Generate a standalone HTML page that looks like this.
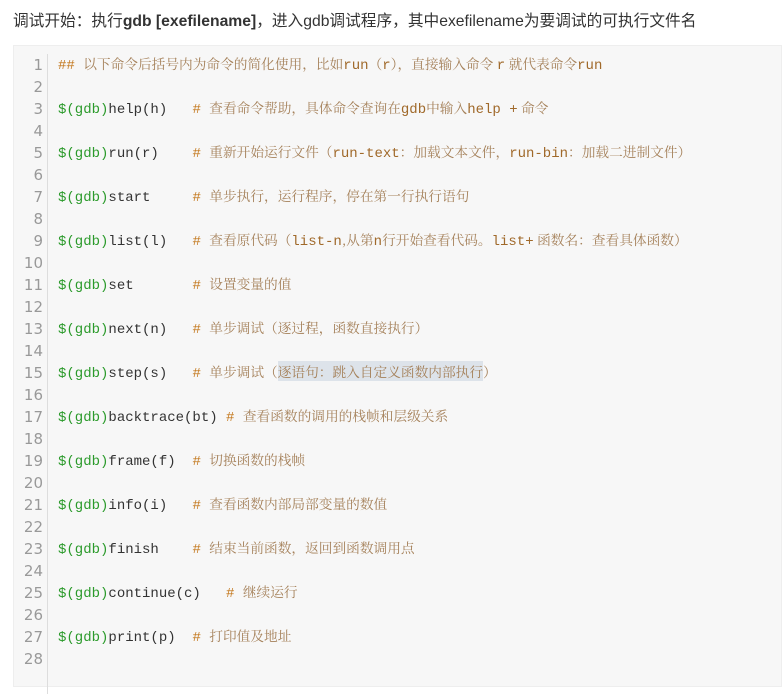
<!DOCTYPE html>
<html><head><meta charset="utf-8"><style>
body{margin:0;background:#fff;width:784px;height:653px;overflow:hidden;font-family:"Liberation Sans","Noto Sans CJK SC",sans-serif;}
.t{position:absolute;left:13px;top:8px;font-size:15.7px;color:#333;}
.code{position:absolute;left:13px;top:45px;width:767px;height:640px;background:#f7f7f7;border:1px solid #eee;}
.ln{position:absolute;left:0;top:8px;width:29px;text-align:right;color:#999;font:15px "DejaVu Sans",sans-serif;}
.ln div{height:22px;line-height:22px;}
.sep{position:absolute;left:33px;top:8px;width:1px;height:640px;background:#ddd;}
.src{position:absolute;left:44px;top:6px;font:14px "Liberation Mono",monospace;color:#333;}
.src div{height:22px;line-height:22px;white-space:pre;overflow:visible;}
.g{color:#2b9a2b}.h{color:#c4791f}.c{color:#a5815a;font-family:"Noto Serif CJK SC",serif;font-size:13.7px}.k{color:#a0692a;font-family:"Liberation Mono",monospace;font-size:14px}
.sel{background:#dde3ea}
</style></head><body>
<div class="t">调试开始：执行<b>gdb [exefilename]</b>，进入gdb调试程序，其中exefilename为要调试的可执行文件名</div>
<div class="code">
<div class="ln"><div>1</div><div>2</div><div>3</div><div>4</div><div>5</div><div>6</div><div>7</div><div>8</div><div>9</div><div>10</div><div>11</div><div>12</div><div>13</div><div>14</div><div>15</div><div>16</div><div>17</div><div>18</div><div>19</div><div>20</div><div>21</div><div>22</div><div>23</div><div>24</div><div>25</div><div>26</div><div>27</div><div>28</div></div>
<div class="sep"></div>
<div class="src">
<div><span class="h">##</span> <span class="c">以下命令后括号内为命令的简化使用，比如<span class="k">run</span>（<span class="k">r</span>），直接输入命令 <span class="k">r</span> 就代表命令<span class="k">run</span></span></div>
<div></div>
<div><span class="g">$(gdb)</span>help(h)   <span class="h">#</span> <span class="c">查看命令帮助，具体命令查询在<span class="k">gdb</span>中输入<span class="k">help +</span> 命令</span></div>
<div></div>
<div><span class="g">$(gdb)</span>run(r)    <span class="h">#</span> <span class="c">重新开始运行文件（<span class="k">run-text</span>：加载文本文件，<span class="k">run-bin</span>：加载二进制文件）</span></div>
<div></div>
<div><span class="g">$(gdb)</span>start     <span class="h">#</span> <span class="c">单步执行，运行程序，停在第一行执行语句</span></div>
<div></div>
<div><span class="g">$(gdb)</span>list(l)   <span class="h">#</span> <span class="c">查看原代码（<span class="k">list-n</span>,从第<span class="k">n</span>行开始查看代码。<span class="k">list+</span> 函数名：查看具体函数）</span></div>
<div></div>
<div><span class="g">$(gdb)</span>set       <span class="h">#</span> <span class="c">设置变量的值</span></div>
<div></div>
<div><span class="g">$(gdb)</span>next(n)   <span class="h">#</span> <span class="c">单步调试（逐过程，函数直接执行）</span></div>
<div></div>
<div><span class="g">$(gdb)</span>step(s)   <span class="h">#</span> <span class="c">单步调试（<span class="sel">逐语句：跳入自定义函数内部执行</span>）</span></div>
<div></div>
<div><span class="g">$(gdb)</span>backtrace(bt) <span class="h">#</span> <span class="c">查看函数的调用的栈帧和层级关系</span></div>
<div></div>
<div><span class="g">$(gdb)</span>frame(f)  <span class="h">#</span> <span class="c">切换函数的栈帧</span></div>
<div></div>
<div><span class="g">$(gdb)</span>info(i)   <span class="h">#</span> <span class="c">查看函数内部局部变量的数值</span></div>
<div></div>
<div><span class="g">$(gdb)</span>finish    <span class="h">#</span> <span class="c">结束当前函数，返回到函数调用点</span></div>
<div></div>
<div><span class="g">$(gdb)</span>continue(c)   <span class="h">#</span> <span class="c">继续运行</span></div>
<div></div>
<div><span class="g">$(gdb)</span>print(p)  <span class="h">#</span> <span class="c">打印值及地址</span></div>
</div>
</div>
</body></html>
